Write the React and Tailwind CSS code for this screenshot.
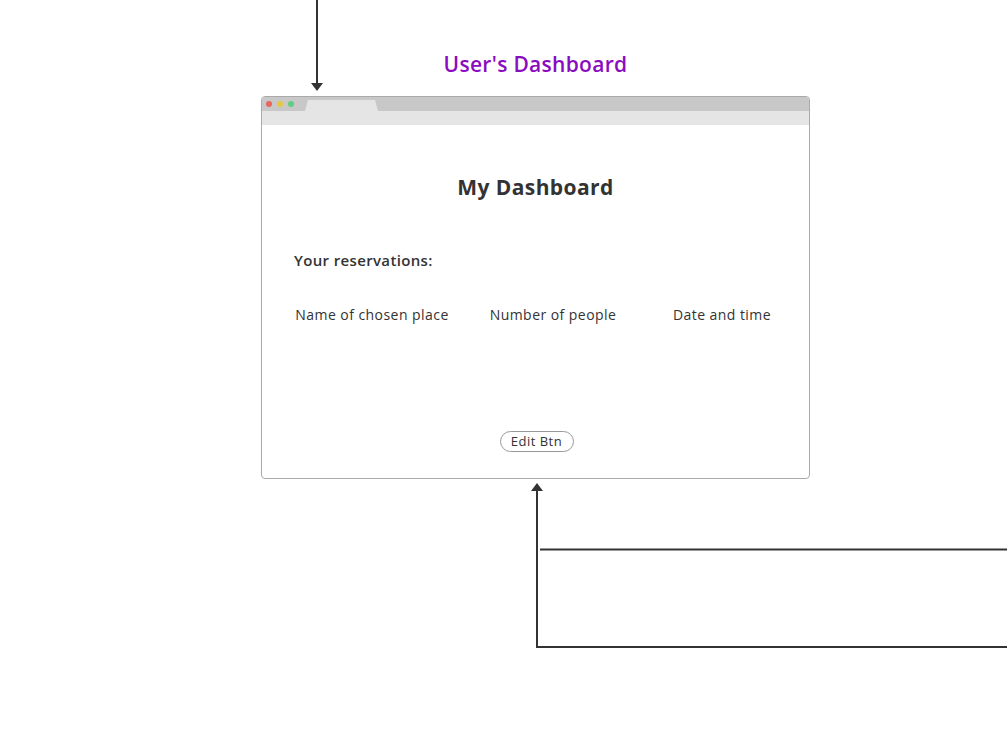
import React from "react";

const font = { fontFamily: '"Open Sans", "Liberation Sans", sans-serif' };

function Connectors() {
  return (
    <svg className="absolute inset-0 pointer-events-none" width="1007" height="730" viewBox="0 0 1007 730">
      {/* arrow into the window from above */}
      <line x1="317" y1="0" x2="317" y2="85" stroke="#333" strokeWidth="2" />
      <polygon points="311,83 323,83 317,91" fill="#333" />
      {/* arrow into the window from below */}
      <polygon points="537,483 531,491 543,491" fill="#333" />
      <polyline points="537,490 537,647 1007,647" fill="none" stroke="#333" strokeWidth="2" />
      <line x1="540" y1="549.5" x2="1007" y2="549.5" stroke="#333" strokeWidth="2" />
    </svg>
  );
}

function BrowserChrome() {
  return (
    <>
      <div className="h-[14px] bg-[#c8c8c8] flex items-center pl-[4px] relative">
        <span className="w-[6px] h-[6px] rounded-full bg-[#e8665a]" />
        <span className="w-[6px] h-[6px] rounded-full bg-[#e8c840] ml-[5px]" />
        <span className="w-[6px] h-[6px] rounded-full bg-[#60d080] ml-[5px]" />
        <div className="absolute left-[43px] bottom-0 w-[73px] h-[11px] bg-[#e5e5e5] rounded-t-[3px] [clip-path:polygon(3px_0,calc(100%-3px)_0,100%_100%,0_100%)]" />
      </div>
      <div className="h-[14px] bg-[#e5e5e5]" />
    </>
  );
}

export default function App() {
  return (
    <div className="relative w-[1007px] h-[730px] bg-white overflow-hidden" style={font}>
      <div className="pl-[261px] pt-[50px] flex flex-col items-start">
        <div className="w-[549px] text-center text-[21px] leading-[28px] font-semibold tracking-[0.3px] text-[#8a0cbf]">
          User's Dashboard
        </div>

        <div className="mt-[18px] w-[549px] h-[383px] border border-[#aaaaaa] rounded-[4px] overflow-hidden bg-white flex flex-col">
          <BrowserChrome />

          <div className="flex flex-col">
            <h1 className="mt-[48px] text-center text-[21px] leading-[28px] font-bold tracking-[0.4px] text-[#333]">
              My Dashboard
            </h1>

            <h2 className="mt-[49px] pl-[32px] text-[15px] leading-[20px] font-semibold tracking-[0.35px] text-[#333]">
              Your reservations:
            </h2>

            <div className="mt-[35px] pl-[20px] grid grid-cols-[180px_182px_156px] text-[14px] leading-[20px] tracking-[0.45px] text-[#333] text-center">
              <span>Name of chosen place</span>
              <span>Number of people</span>
              <span>Date and time</span>
            </div>

            <div className="mt-[106px] flex justify-center pl-[2px]">
              <button className="w-[74px] h-[21px] rounded-full border border-[#999] text-[13px] leading-[19px] tracking-[0.5px] text-[#333] bg-white">
                Edit Btn
              </button>
            </div>
          </div>
        </div>
      </div>

      <Connectors />
    </div>
  );
}
